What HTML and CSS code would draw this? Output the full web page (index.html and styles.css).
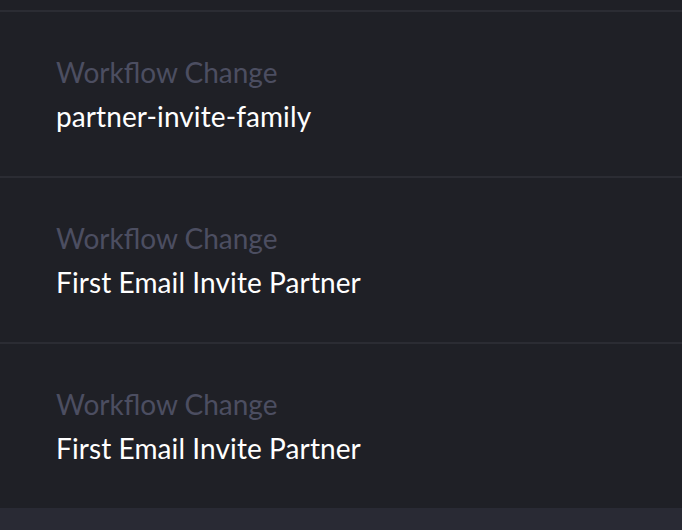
FILE: index.html
```html
<!DOCTYPE html>
<html lang="en">
<head>
    <meta charset="UTF-8">
    <meta name="viewport" content="width=device-width, initial-scale=1.0">
    <title>Workflow Changes</title>
    <link rel="stylesheet" href="styles.css">
</head>
<body>
    <div class="list">
        <div class="list-top"></div>
        <div class="item">
            <div class="item-label">Workflow Change</div>
            <div class="item-value">partner-invite-family</div>
        </div>
        <div class="item">
            <div class="item-label">Workflow Change</div>
            <div class="item-value">First Email Invite Partner</div>
        </div>
        <div class="item">
            <div class="item-label">Workflow Change</div>
            <div class="item-value">First Email Invite Partner</div>
        </div>
    </div>
    <div class="footer"></div>
</body>
</html>
```

FILE: styles.css
```css
* {
    margin: 0;
    padding: 0;
    box-sizing: border-box;
}

body {
    background-color: #1f2026;
    font-family: Lato, "Open Sans", sans-serif;
    height: 100vh;
    display: flex;
    flex-direction: column;
}

.list {
    flex: 1;
}

.list-top {
    height: 10px;
}

.item {
    height: 166px;
    border-top: 2px solid #2b2c33;
    padding: 38px 56px 0;
}

.item-label {
    font-size: 28px;
    line-height: 44px;
    color: #4c4e61;
}

.item-value {
    font-size: 28px;
    line-height: 44px;
    color: #ffffff;
    letter-spacing: 0.1px;
}

.footer {
    height: 22px;
    background-color: #292a34;
}
```
